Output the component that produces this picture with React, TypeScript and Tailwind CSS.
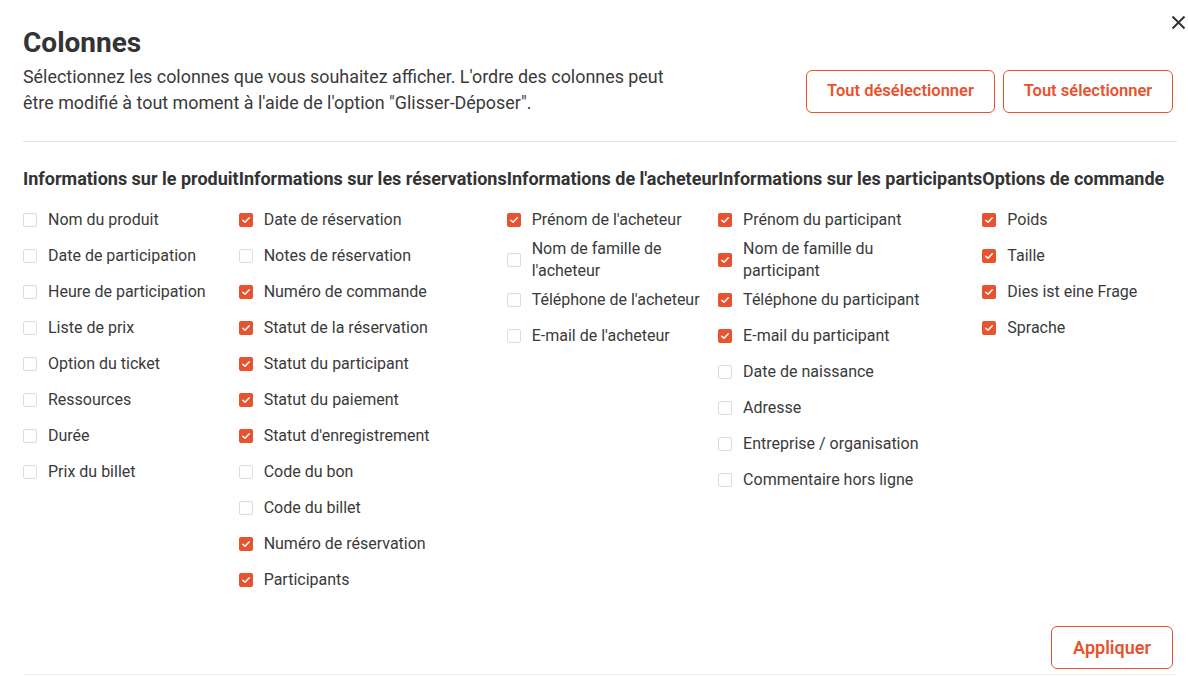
import React, { useState } from "react";

type Group = { title: string; items: [string, boolean][] };

const GROUPS: Group[] = [
  {
    title: "Informations sur le produit",
    items: [
      ["Nom du produit", false],
      ["Date de participation", false],
      ["Heure de participation", false],
      ["Liste de prix", false],
      ["Option du ticket", false],
      ["Ressources", false],
      ["Durée", false],
      ["Prix du billet", false],
    ],
  },
  {
    title: "Informations sur les réservations",
    items: [
      ["Date de réservation", true],
      ["Notes de réservation", false],
      ["Numéro de commande", true],
      ["Statut de la réservation", true],
      ["Statut du participant", true],
      ["Statut du paiement", true],
      ["Statut d'enregistrement", true],
      ["Code du bon", false],
      ["Code du billet", false],
      ["Numéro de réservation", true],
      ["Participants", true],
    ],
  },
  {
    title: "Informations de l'acheteur",
    items: [
      ["Prénom de l'acheteur", true],
      ["Nom de famille de l'acheteur", false],
      ["Téléphone de l'acheteur", false],
      ["E-mail de l'acheteur", false],
    ],
  },
  {
    title: "Informations sur les participants",
    items: [
      ["Prénom du participant", true],
      ["Nom de famille du participant", true],
      ["Téléphone du participant", true],
      ["E-mail du participant", true],
      ["Date de naissance", false],
      ["Adresse", false],
      ["Entreprise / organisation", false],
      ["Commentaire hors ligne", false],
    ],
  },
  {
    title: "Options de commande",
    items: [
      ["Poids", true],
      ["Taille", true],
      ["Dies ist eine Frage", true],
      ["Sprache", true],
    ],
  },
];

const outlineButton =
  "whitespace-nowrap rounded-md border border-[#e6532e] bg-white font-semibold text-[#e6532e]";

function CheckRow({ label, initial }: { label: string; initial: boolean }) {
  const [checked, setChecked] = useState(initial);
  return (
    <label className="flex min-h-[36px] cursor-pointer items-center">
      <span className="flex h-[36px] w-[25px] flex-none items-center">
        <span
          onClick={() => setChecked((c) => !c)}
          className={
            checked
              ? "flex h-[14px] w-[14px] items-center justify-center rounded-[2px] bg-[#e6532e]"
              : "h-[14px] w-[14px] rounded-[2px] border border-[#dcdcdc] bg-white"
          }
        >
          {checked ? (
            <svg width="10" height="10" viewBox="0 0 10 10" fill="none">
              <path
                d="M1.8 5.2 4 7.3 8.3 2.8"
                stroke="white"
                strokeWidth="1.5"
                strokeLinecap="round"
                strokeLinejoin="round"
              />
            </svg>
          ) : null}
        </span>
      </span>
      <span className="max-w-[182px] text-[16px] leading-[22px] text-[#3a3a3a]">{label}</span>
    </label>
  );
}

export default function App() {
  return (
    <div
      className="relative min-h-[676px] bg-white pl-[23px] pr-[11px] text-[#333]"
      style={{ fontFamily: "Roboto, 'Noto Sans', sans-serif" }}
    >
      <button
        type="button"
        aria-label="Fermer"
        className="absolute right-0 top-[12px] flex h-[20px] w-[20px] items-center justify-center text-[#333]"
      >
        <svg width="15" height="15" viewBox="0 0 15 15" fill="none">
          <path d="M1.5 1.5 13.5 13.5M13.5 1.5 1.5 13.5" stroke="currentColor" strokeWidth="2" />
        </svg>
      </button>

      <div className="flex items-end justify-between border-b border-[#e2e2e2] pb-[25px] pt-[26px]">
        <div>
          <h1 className="text-[28px] font-bold leading-[34px] text-[#333]">Colonnes</h1>
          <p className="mt-[4px] w-[660px] text-[17.9px] leading-[26px] text-[#3a3a3a]">
            Sélectionnez les colonnes que vous souhaitez afficher. L'ordre des colonnes peut
            être modifié à tout moment à l'aide de l'option "Glisser-Déposer".
          </p>
        </div>
        <div className="mb-[3px] mr-[4px] flex gap-2">
          <button type="button" className={`h-[43px] w-[189px] text-[16.5px] ${outlineButton}`}>
            Tout désélectionner
          </button>
          <button type="button" className={`h-[43px] w-[170px] text-[16.5px] ${outlineButton}`}>
            Tout sélectionner
          </button>
        </div>
      </div>

      <div className="flex pt-[25px]">
        {GROUPS.map((group) => (
          <div key={group.title} className="w-min flex-none">
            <h2 className="whitespace-nowrap text-[18px] font-bold leading-[24px] text-[#333]">
              {group.title}
            </h2>
            <div className="mt-[11px] flex flex-col">
              {group.items.map(([label, checked]) => (
                <CheckRow key={label} label={label} initial={checked} />
              ))}
            </div>
          </div>
        ))}
      </div>

      <div className="flex justify-end border-b border-[#ececec] pb-[5px] pt-[28px]">
        <button type="button" className={`mr-[4px] h-[43px] w-[122px] text-[18px] ${outlineButton}`}>
          Appliquer
        </button>
      </div>
    </div>
  );
}
